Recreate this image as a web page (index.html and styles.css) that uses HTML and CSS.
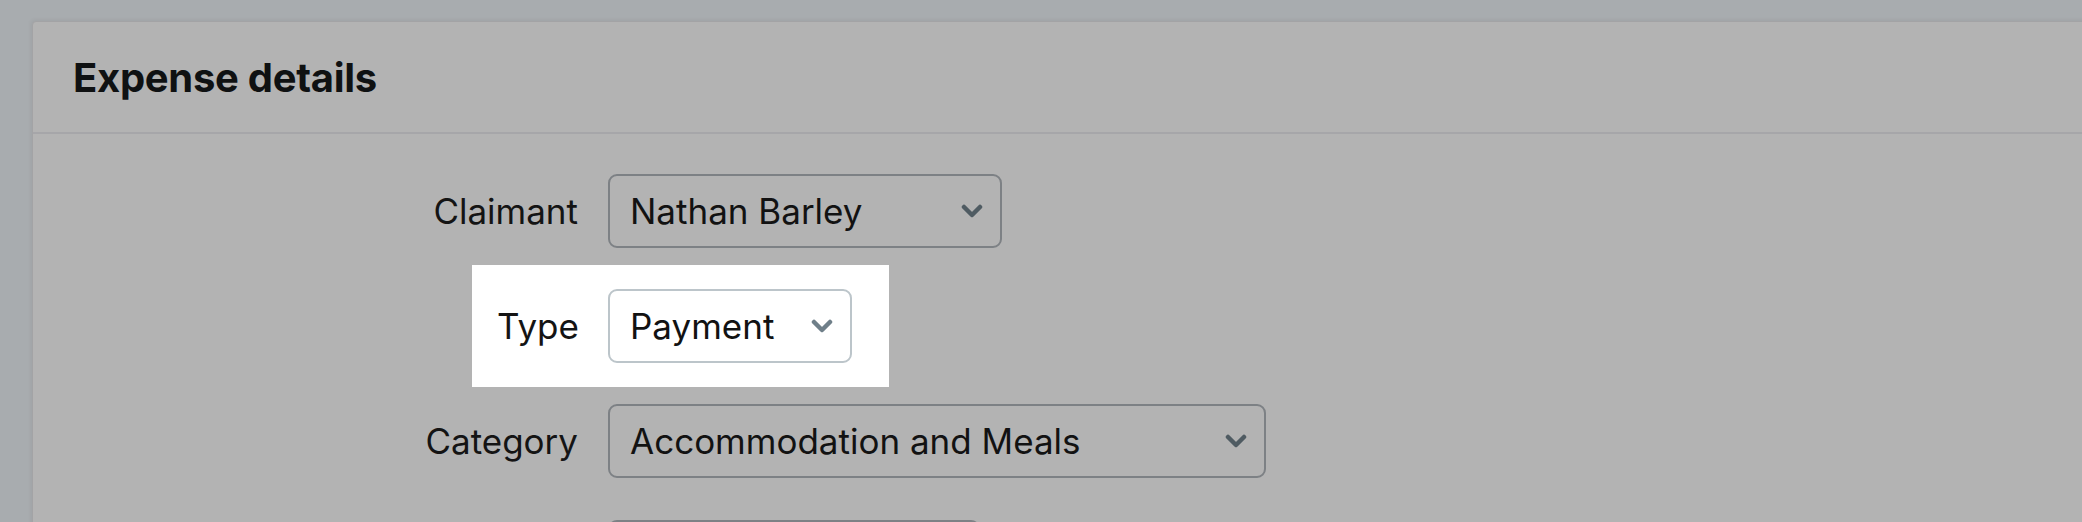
FILE: index.html
```html
<!DOCTYPE html>
<html lang="en">
<head>
<meta charset="utf-8">
<title>Expense details</title>
<link rel="stylesheet" href="styles.css">
</head>
<body>
<div class="page">
  <section class="card">
    <header class="card-header">
      <h2 class="card-title">Expense details</h2>
    </header>
    <div class="form">
      <div class="row">
        <label class="label">Claimant</label>
        <div class="select select-claimant">
          <span class="select-value">Nathan Barley</span>
          <svg class="chev" viewBox="0 0 22 14" width="22" height="14"><polyline points="3,3 11,11 19,3"/></svg>
        </div>
      </div>
      <div class="row">
        <div class="spot">
          <label class="label label-spot">Type</label>
          <div class="select select-type">
            <span class="select-value">Payment</span>
            <svg class="chev" viewBox="0 0 22 14" width="22" height="14"><polyline points="3,3 11,11 19,3"/></svg>
          </div>
        </div>
      </div>
      <div class="row">
        <label class="label">Category</label>
        <div class="select select-category">
          <span class="select-value">Accommodation and Meals</span>
          <svg class="chev" viewBox="0 0 22 14" width="22" height="14"><polyline points="3,3 11,11 19,3"/></svg>
        </div>
      </div>
      <div class="row">
        <span class="label"></span>
        <div class="split">
          <div class="split-main"></div>
          <div class="split-addon"></div>
        </div>
      </div>
    </div>
  </section>
</div>
</body>
</html>
```

FILE: styles.css
```css
html, body {
  margin: 0;
  padding: 0;
}
body {
  background: #a8acaf;
  font-family: "Inter", "Noto Sans", sans-serif;
  color: #141414;
  width: 2082px;
  height: 522px;
  overflow: hidden;
}
.page {
  padding: 21px 0 0 32px;
}
.card {
  background: #b3b3b3;
  border: 1px solid #a3a3a5;
  border-radius: 4px 0 0 0;
  box-shadow: -1px -1px 4px rgba(0, 0, 0, 0.06);
  width: 2100px;
  height: 700px;
}
.card-header {
  height: 110px;
  display: flex;
  align-items: center;
  padding-left: 40px;
  border-bottom: 2px solid #a6a6a9;
}
.card-title {
  margin: 0;
  font-size: 40px;
  font-weight: 700;
  color: #0f1112;
  letter-spacing: -0.3px;
}
.form {
  padding-top: 40px;
  display: flex;
  flex-direction: column;
  gap: 41px;
}
.row {
  display: flex;
  align-items: center;
  gap: 30px;
  height: 74px;
}
.label {
  width: 545px;
  text-align: right;
  font-size: 35px;
  color: #141414;
}
.spot {
  display: flex;
  align-items: center;
  gap: 30px;
  margin-left: 439px;
  padding: 24px 37px 24px 25px;
  background: #ffffff;
}
.label-spot {
  width: 81px;
}
.select {
  box-sizing: border-box;
  height: 74px;
  border: 2px solid #7d8185;
  border-radius: 9px;
  display: flex;
  align-items: center;
  justify-content: space-between;
  padding: 0 17px 0 20px;
  font-size: 35px;
  color: #121212;
}
.select-claimant { width: 394px; }
.select-category { width: 658px; }
.select-type {
  width: 244px;
  background: #ffffff;
  border-color: #bcc5ca;
}
.chev {
  flex: none;
}
.chev polyline {
  fill: none;
  stroke: #4f5b62;
  stroke-width: 4.5;
  stroke-linecap: round;
  stroke-linejoin: round;
}
.select-type .chev polyline {
  stroke: #6f7f89;
}
.split {
  display: flex;
  height: 74px;
  align-self: flex-start;
  margin-top: 1px;
}
.split-main {
  box-sizing: border-box;
  width: 289px;
  height: 74px;
  border: 2px solid #7d8185;
  border-radius: 9px 0 0 9px;
}
.split-addon {
  box-sizing: border-box;
  width: 83px;
  height: 74px;
  border: 2px solid #7d8185;
  border-left: none;
  border-radius: 0 9px 9px 0;
}
```
